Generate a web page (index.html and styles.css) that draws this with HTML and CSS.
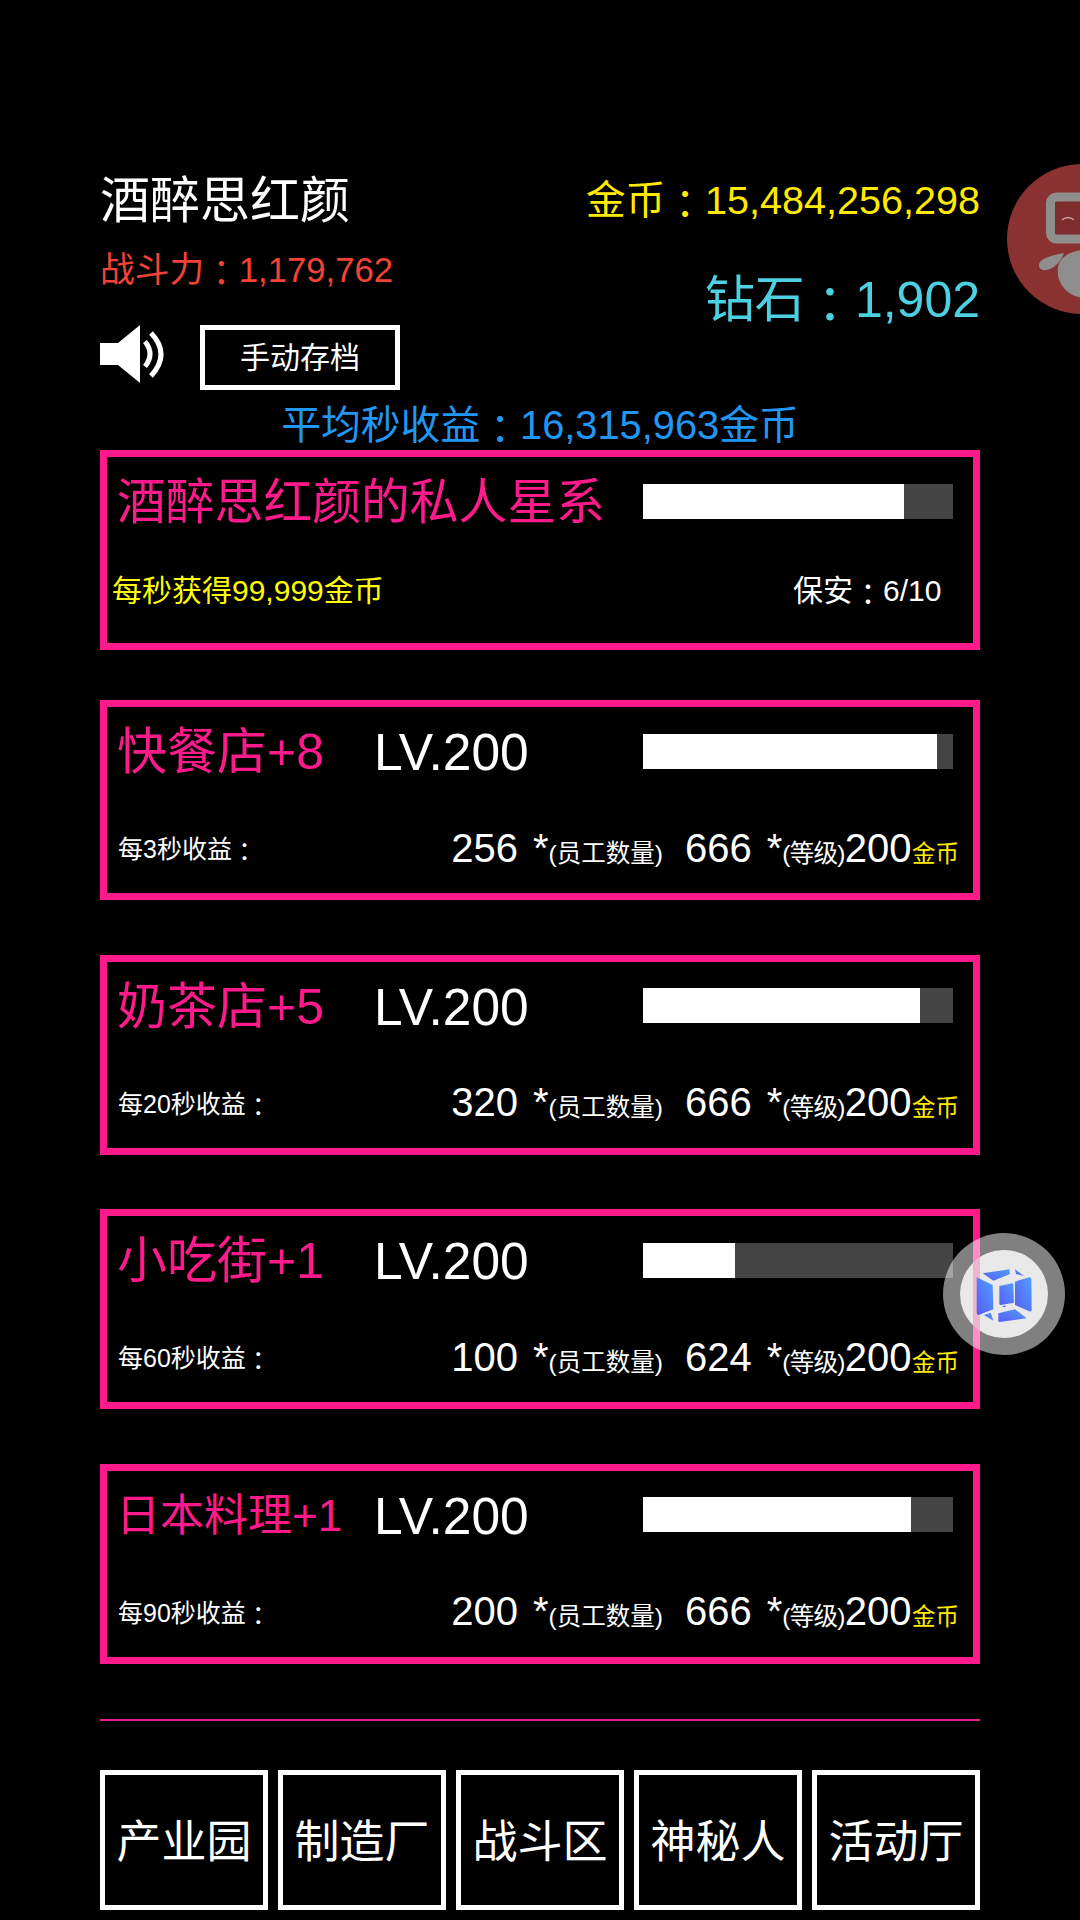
FILE: index.html
```html
<!DOCTYPE html>
<html lang="zh-CN">
<head>
<meta charset="utf-8">
<title>酒醉思红颜</title>
<link rel="stylesheet" href="styles.css">
</head>
<body>
<main class="page">
  <header class="header">
    <div class="player">
      <div class="player-name">酒醉思红颜</div>
      <div class="player-power">战斗力<span class="fw" lang="zh-TW">：</span>1,179,762</div>
      <div class="player-actions">
        <svg class="speaker" viewBox="0 0 66 60" aria-hidden="true">
          <path d="M0 18H18L40 0V58L18 40H0Z" fill="#fff"/>
          <path d="M45 16.500Q55 29 45 41.500" fill="none" stroke="#fff" stroke-width="5"/>
          <path d="M51 8Q71 29 51 51" fill="none" stroke="#fff" stroke-width="5"/>
        </svg>
        <div class="save-btn">手动存档</div>
      </div>
    </div>
    <div class="wallet">
      <div class="wallet-gold">金币<span class="fw" lang="zh-TW">：</span>15,484,256,298</div>
      <div class="wallet-diamond">钻石<span class="fw" lang="zh-TW">：</span>1,902</div>
    </div>
  </header>
  <div class="income">平均秒收益<span class="fw" lang="zh-TW">：</span>16,315,963金币</div>

  <section class="card card-first">
    <div class="card-top">
      <div class="card-title">酒醉思红颜的私人星系</div>
      <div class="bar"><div class="bar-fill" style="width:84.2%"></div></div>
    </div>
    <div class="card-bottom card-bottom-first">
      <div class="gain">每秒获得99,999金币</div>
      <div class="guard">保安<span class="fw" lang="zh-TW">：</span>6/10</div>
    </div>
  </section>

  <section class="card">
    <div class="card-top">
      <div class="card-title">快餐店+8</div>
      <div class="card-level">LV.200</div>
      <div class="bar"><div class="bar-fill" style="width:94.8%"></div></div>
    </div>
    <div class="card-bottom">
      <div class="period">每3秒收益<span class="fw" lang="zh-TW">：</span></div>
      <div class="formula"><span class="num">256</span><span class="star">*</span><span class="unit">(员工数量)</span><span class="num num-b">666</span><span class="star">*</span><span class="unit unit-short">(等级)</span><span class="num">200</span><span class="coin">金币</span></div>
    </div>
  </section>

  <section class="card">
    <div class="card-top">
      <div class="card-title">奶茶店+5</div>
      <div class="card-level">LV.200</div>
      <div class="bar"><div class="bar-fill" style="width:89.4%"></div></div>
    </div>
    <div class="card-bottom">
      <div class="period">每20秒收益<span class="fw" lang="zh-TW">：</span></div>
      <div class="formula"><span class="num">320</span><span class="star">*</span><span class="unit">(员工数量)</span><span class="num num-b">666</span><span class="star">*</span><span class="unit unit-short">(等级)</span><span class="num">200</span><span class="coin">金币</span></div>
    </div>
  </section>

  <section class="card">
    <div class="card-top">
      <div class="card-title">小吃街+1</div>
      <div class="card-level">LV.200</div>
      <div class="bar"><div class="bar-fill" style="width:29.7%"></div></div>
    </div>
    <div class="card-bottom">
      <div class="period">每60秒收益<span class="fw" lang="zh-TW">：</span></div>
      <div class="formula"><span class="num">100</span><span class="star">*</span><span class="unit">(员工数量)</span><span class="num num-b">624</span><span class="star">*</span><span class="unit unit-short">(等级)</span><span class="num">200</span><span class="coin">金币</span></div>
    </div>
  </section>

  <section class="card">
    <div class="card-top">
      <div class="card-title card-title-sm">日本料理+1</div>
      <div class="card-level">LV.200</div>
      <div class="bar"><div class="bar-fill" style="width:86.5%"></div></div>
    </div>
    <div class="card-bottom">
      <div class="period">每90秒收益<span class="fw" lang="zh-TW">：</span></div>
      <div class="formula"><span class="num">200</span><span class="star">*</span><span class="unit">(员工数量)</span><span class="num num-b">666</span><span class="star">*</span><span class="unit unit-short">(等级)</span><span class="num">200</span><span class="coin">金币</span></div>
    </div>
  </section>

  <hr class="divider">

  <nav class="tabs">
    <div class="tab">产业园</div>
    <div class="tab">制造厂</div>
    <div class="tab">战斗区</div>
    <div class="tab">神秘人</div>
    <div class="tab">活动厅</div>
  </nav>
</main>

<div class="robot-badge">
  <svg viewBox="0 0 75 150" width="75" height="150" aria-hidden="true">
    <rect x="43.500" y="33" width="42" height="42" rx="6" fill="#7f2c2c" stroke="#8e8e8e" stroke-width="9"/>
    <path d="M55 56q6-5 12 0" fill="none" stroke="#c8a8a8" stroke-width="1.300"/>
    <path d="M57 89C46 91 36 94 33 98C30 103 34 107 39 106C47 105 54 98 57 89Z" fill="#8e8e8e"/>
    <path d="M75 86C62 88 53 93 51 103C49 118 58 131 75 134Z" fill="#8e8e8e"/>
  </svg>
</div>

<div class="float-btn">
  <div class="float-inner">
    <span class="float-stripe"></span>
    <svg class="float-icon" viewBox="0 0 264 264" aria-hidden="true">
      <defs>
        <linearGradient id="cube" x1="1" y1="0" x2="0" y2="1">
          <stop offset="0" stop-color="#4f9fff"/>
          <stop offset="1" stop-color="#5a5cf5"/>
        </linearGradient>
      </defs>
      <path d="M68 70L148 58L150 72L100 92Z" fill="url(#cube)"/>
      <path d="M165 58L192 78L168 72Z" fill="url(#cube)"/>
      <path d="M50 82L98 105L100 178L56 195Q50 195 50 189Z" fill="url(#cube)"/>
      <path d="M165 95L208 82Q214 82 214 88L215 180Q214 186 208 184L165 165Z" fill="url(#cube)"/>
      <path d="M118 108L156 100Q160 100 160 104L162 158L122 165Q118 165 118 161Z" fill="url(#cube)"/>
      <path d="M125 170L138 166L135 172Z" fill="#5a5cf5"/>
      <path d="M72 195L92 188L100 212Z" fill="url(#cube)"/>
      <path d="M115 190L165 178L200 205L118 216Q115 216 115 213Z" fill="url(#cube)"/>
    </svg>
  </div>
</div>
</body>
</html>
```

FILE: styles.css
```css
* { box-sizing: border-box; }
html, body { margin: 0; padding: 0; background: #000; }
body {
  width: 1080px;
  height: 1920px;
  overflow: hidden;
  position: relative;
  font-family: "Liberation Sans", "Noto Sans CJK SC", sans-serif;
  color: #fff;
}
.fw { font-family: "Noto Sans CJK TC", sans-serif; line-height: 0; vertical-align: -0.120em; }
.page { padding: 164px 100px 0; }

.header { display: flex; justify-content: space-between; height: 246px; }
.player-name { font-size: 50px; line-height: 70px; margin-top: 2px; }
.player-power { font-size: 34.700px; line-height: 40px; margin-top: 14px; color: #f44336; }
.player-actions { display: flex; align-items: flex-start; margin-top: 35px; }
.speaker { width: 66px; height: 60px; margin-right: 34px; }
.save-btn {
  width: 200px; height: 65px;
  border: 5px solid #fff;
  font-size: 30px; line-height: 55px; text-align: center;
}
.wallet { text-align: right; padding-top: 1px; }
.wallet-gold { font-size: 39.600px; line-height: 70px; color: #ffea00; }
.wallet-diamond { font-size: 50px; line-height: 60px; margin-top: 35px; color: #4dd0e1; }

.income { font-size: 39.800px; line-height: 40px; text-align: center; color: #2196f3; height: 45px; margin-top: -5px; }

.card {
  height: 200px;
  border: 7px solid #ff1a8c;
  padding: 0 14px 0 11px;
  margin-bottom: 54.670px;
}
.card-first { margin-bottom: 50px; }
.card-top { display: flex; align-items: center; height: 90px; }
.card-title { font-size: 50px; line-height: 70px; color: #ff1a8c; width: 257px; margin-left: -1px; white-space: nowrap; }
.card-first .card-title { width: auto; font-size: 48.800px; }
.card-title-sm { font-size: 44px; margin-left: -2px; width: 258px; }
.card-level { font-size: 51.500px; line-height: 70px; }
.bar { width: 310px; height: 35px; background: #444; margin: 0 6px 2px auto; }
.bar-fill { height: 100%; background: #fff; }
.card-bottom { display: flex; align-items: center; justify-content: space-between; height: 96px; padding-top: 6px; }
.card-bottom-first { padding-top: 0; padding-bottom: 14px; padding-right: 17.600px; }
.gain { font-size: 30px; color: #ffff00; margin-left: -6px; }
.guard { font-size: 30px; }
.period { font-size: 25px; margin-bottom: 2px; }
.formula { display: flex; align-items: baseline; white-space: nowrap; }
.num { font-size: 40px; }
.num-b { margin-left: 22px; }
.star { font-size: 40px; margin-left: 15px; }
.unit { font-size: 24.500px; }
.unit-short { letter-spacing: -0.700px; }
.coin { font-size: 23.500px; color: #ffea00; margin-left: 0.500px; }

.divider { height: 2px; border: 0; margin: 0; background: #e91e8c; }

.tabs { display: grid; grid-template-columns: repeat(5, 168px); gap: 10px; margin-top: 49.330px; }
.tab {
  height: 140px;
  border: 5px solid #fff;
  font-size: 45px;
  padding-bottom: 2px;
  display: flex; align-items: center; justify-content: center;
}

.robot-badge {
  position: absolute; left: 1007px; top: 164px;
  width: 150px; height: 150px; border-radius: 50%;
  background: #8a3232; overflow: hidden;
}
.robot-badge svg { position: absolute; left: 0; top: 0; }
.float-btn {
  position: absolute; left: 943px; top: 1233px;
  width: 122px; height: 122px; border-radius: 50%;
  background: rgba(255,255,255,.5);
  display: flex; align-items: center; justify-content: center;
}
.float-inner {
  position: relative;
  width: 88px; height: 88px; border-radius: 50%;
  background: #e9e9e9;
  overflow: hidden;
}
.float-stripe { position: absolute; left: 13px; top: 0; width: 7px; height: 100%; background: rgba(255,26,140,.25); }
.float-icon { position: absolute; left: 0; top: 0; width: 88px; height: 88px; }
```
